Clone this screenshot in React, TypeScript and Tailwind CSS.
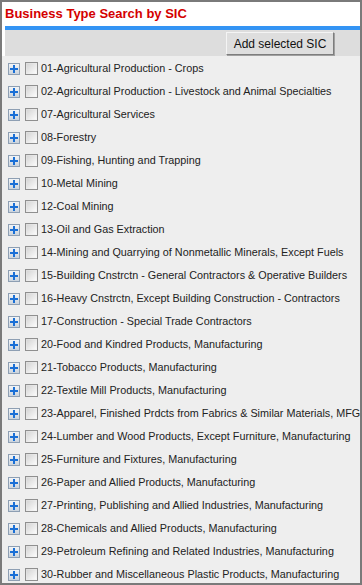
import React from "react";

const items = [
  "01-Agricultural Production - Crops",
  "02-Agricultural Production - Livestock and Animal Specialties",
  "07-Agricultural Services",
  "08-Forestry",
  "09-Fishing, Hunting and Trapping",
  "10-Metal Mining",
  "12-Coal Mining",
  "13-Oil and Gas Extraction",
  "14-Mining and Quarrying of Nonmetallic Minerals, Except Fuels",
  "15-Building Cnstrctn - General Contractors & Operative Builders",
  "16-Heavy Cnstrctn, Except Building Construction - Contractors",
  "17-Construction - Special Trade Contractors",
  "20-Food and Kindred Products, Manufacturing",
  "21-Tobacco Products, Manufacturing",
  "22-Textile Mill Products, Manufacturing",
  "23-Apparel, Finished Prdcts from Fabrics & Similar Materials, MFG",
  "24-Lumber and Wood Products, Except Furniture, Manufacturing",
  "25-Furniture and Fixtures, Manufacturing",
  "26-Paper and Allied Products, Manufacturing",
  "27-Printing, Publishing and Allied Industries, Manufacturing",
  "28-Chemicals and Allied Products, Manufacturing",
  "29-Petroleum Refining and Related Industries, Manufacturing",
  "30-Rubber and Miscellaneous Plastic Products, Manufacturing",
];

function PlusIcon() {
  return (
    <svg width="12" height="12" viewBox="0 0 12 12" className="shrink-0">
      <defs>
        <linearGradient id="pg" x1="0" y1="0" x2="0" y2="1">
          <stop offset="0" stopColor="#f4f6f8" />
          <stop offset="1" stopColor="#c9d2dc" />
        </linearGradient>
      </defs>
      <rect x="0.5" y="0.5" width="11" height="11" fill="url(#pg)" stroke="#8e9fb3" />
      <rect x="5" y="2" width="2" height="8" fill="#1a6fd6" />
      <rect x="2" y="5" width="8" height="2" fill="#1a6fd6" />
    </svg>
  );
}

function CheckBox() {
  return (
    <div className="w-[13px] h-[13px] shrink-0 border border-[#8f8f8f] bg-gradient-to-br from-[#dcdcdc] to-[#f8f8f8] p-[1px]">
      <div className="w-full h-full bg-gradient-to-br from-[#d6d6d6] to-[#fafafa]" />
    </div>
  );
}

export default function App() {
  return (
    <div
      className="w-[362px] h-[585px] border-2 border-[#7a7a7a] bg-white flex flex-col overflow-hidden"
      style={{ fontFamily: '"Liberation Sans", Arial, sans-serif' }}
    >
      <div className="shrink-0 h-[24px] pl-[3px] pt-[4px] text-[13px] font-bold text-[#d40000] leading-[15px]">
        Business Type Search by SIC
      </div>
      <div className="shrink-0 ml-[3px] h-[4px] bg-[#3394f4]" />
      <div className="shrink-0 ml-[3px] h-[26px] bg-[#dddddd] flex justify-end items-start pt-[2px] pr-[26px]">
        <button className="w-[108px] h-[23px] bg-[#dedede] border border-t-[#f4f4f4] border-l-[#f4f4f4] border-r-[#7d7d7d] border-b-[#7d7d7d] shadow-[1px_1px_0_#a0a0a0] text-[12px] text-[#111] leading-none">
          Add selected SIC
        </button>
      </div>
      <div className="flex-1 min-h-0 bg-[#eeeeee] pt-[1px]">
        {items.map((t) => (
          <div key={t} className="h-[23px] flex items-center pl-[6px] gap-[5px]">
            <PlusIcon />
            <CheckBox />
            <span className="ml-[-2px] text-[10.8px] text-[#222] whitespace-nowrap leading-none">{t}</span>
          </div>
        ))}
      </div>
    </div>
  );
}
